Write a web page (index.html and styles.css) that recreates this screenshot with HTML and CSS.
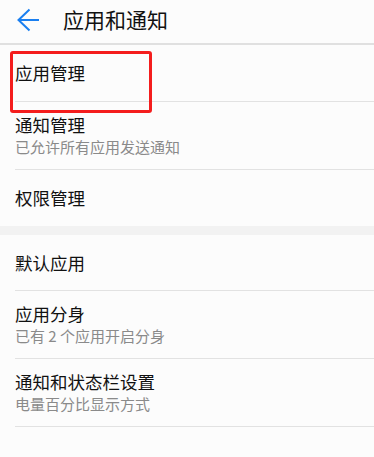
FILE: index.html
```html
<!DOCTYPE html>
<html lang="zh-CN">
<head>
    <meta charset="UTF-8">
    <meta name="viewport" content="width=device-width, initial-scale=1.0">
    <title>应用和通知</title>
    <link rel="stylesheet" href="styles.css">
</head>
<body>
    <div class="screen">
        <div class="header">
            <svg class="back" width="24" height="24" viewBox="0 0 24 24">
                <path d="M1 12 H22 M12.5 1.5 L1.5 12 L12.5 22.5" fill="none" stroke="#1a7ff0" stroke-width="2"/>
            </svg>
            <div class="title">应用和通知</div>
        </div>

        <div class="group">
            <div class="item highlighted">
                <div class="item-title">应用管理</div>
            </div>
            <div class="item two-line">
                <div class="item-title">通知管理</div>
                <div class="item-sub">已允许所有应用发送通知</div>
            </div>
            <div class="item last">
                <div class="item-title">权限管理</div>
            </div>
        </div>

        <div class="spacer"></div>

        <div class="group">
            <div class="item">
                <div class="item-title">默认应用</div>
            </div>
            <div class="item two-line">
                <div class="item-title">应用分身</div>
                <div class="item-sub">已有 2 个应用开启分身</div>
            </div>
            <div class="item two-line">
                <div class="item-title">通知和状态栏设置</div>
                <div class="item-sub">电量百分比显示方式</div>
            </div>
        </div>
    </div>
</body>
</html>
```

FILE: styles.css
```css
body {
    margin: 0;
    background-color: #fcfcfc;
    font-family: "Noto Sans CJK SC", "Noto Sans", sans-serif;
}
.screen {
    width: 374px;
    height: 457px;
    overflow: hidden;
}
.header {
    display: flex;
    align-items: center;
    height: 43px;
    border-bottom: 2px solid #e0e0e0;
}
.back {
    margin-left: 17px;
    margin-top: -4px;
}
.title {
    margin-left: 22px;
    margin-top: -6px;
    font-size: 21px;
    color: #111;
}
.group {
    padding-left: 15px;
}
.item {
    display: flex;
    flex-direction: column;
    justify-content: center;
    height: 56px;
    box-sizing: border-box;
    border-bottom: 1px solid #e2e2e2;
}
.item.two-line {
    height: 68px;
}
.item.last {
    border-bottom: none;
}
.item-title {
    font-size: 17.5px;
    color: #111;
    line-height: 22px;
}
.item-sub {
    font-size: 15px;
    color: #8a8a8a;
    line-height: 21px;
}
.highlighted {
    position: relative;
    height: 57px;
}
.highlighted::after {
    content: "";
    position: absolute;
    left: -5px;
    top: 6px;
    width: 136px;
    height: 56px;
    border: 3px solid #f41d1d;
    border-radius: 3px;
}
.spacer {
    height: 9px;
    background-color: #f2f2f2;
}
```
